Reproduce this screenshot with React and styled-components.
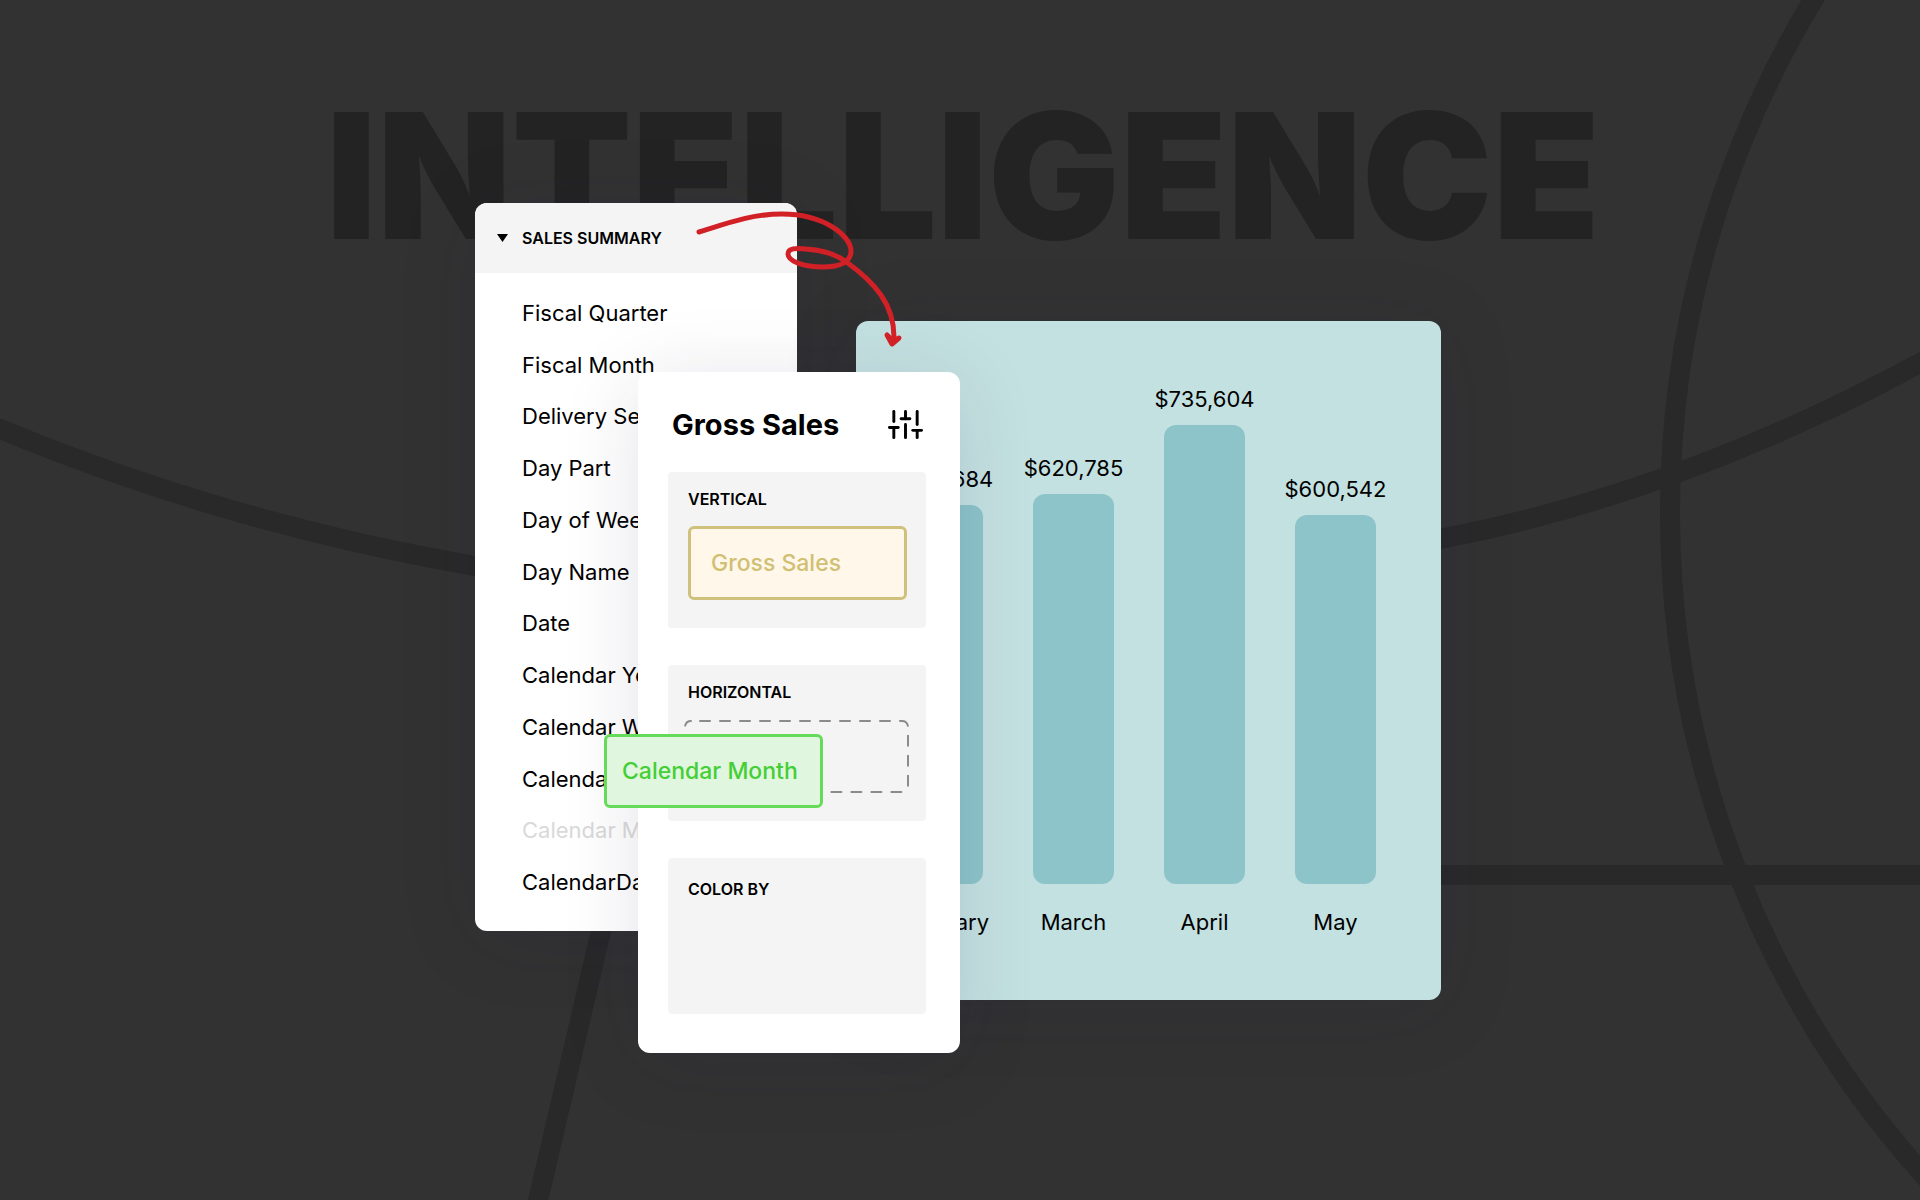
import React, { useState } from 'react';
import styled, { createGlobalStyle } from 'styled-components';
import { FiSliders } from 'react-icons/fi';

const fields = [
  { name: 'Fiscal Quarter' },
  { name: 'Fiscal Month' },
  { name: 'Delivery Service' },
  { name: 'Day Part' },
  { name: 'Day of Week' },
  { name: 'Day Name' },
  { name: 'Date' },
  { name: 'Calendar Year' },
  { name: 'Calendar Week' },
  { name: 'Calendar Quarter' },
  { name: 'Calendar Month', dragging: true },
  { name: 'CalendarDate' },
];

const sales = [
  { month: 'February', value: '$605,684', height: 379 },
  { month: 'March', value: '$620,785', height: 390 },
  { month: 'April', value: '$735,604', height: 459 },
  { month: 'May', value: '$600,542', height: 369 },
];

const App = () => {
  const [open, setOpen] = useState(true);

  return (
    <Page>
      <GlobalStyle />
      <Backdrop viewBox="0 0 1920 1200" preserveAspectRatio="xMidYMid slice" aria-hidden="true">
        <circle cx="2660" cy="513" r="990" />
        <path d="M-40 412 L0 429 Q230 524 475 566 C795 623 1120 610 1440 539 Q1680 493 1920 363 L1960 343" />
        <path d="M1300 875 H1960" />
        <path d="M615 871 L529 1239" />
      </Backdrop>

      <Title>INTELLIGENCE</Title>

      <Stage>
        <FieldsCard>
          <FieldsHeader type="button" aria-expanded={open} onClick={() => setOpen(!open)}>
            <Caret viewBox="0 0 11 8" aria-hidden="true">
              <path d="M0 0 H11 L5.5 8 Z" />
            </Caret>
            SALES SUMMARY
          </FieldsHeader>
          {open && (
            <FieldList>
              {fields.map(field => (
                <Field key={field.name} $dragging={field.dragging}>{field.name}</Field>
              ))}
            </FieldList>
          )}
        </FieldsCard>

        <ConfigCard>
          <ConfigHeader>
            <ConfigTitle>Gross Sales</ConfigTitle>
            <IconButton type="button" aria-label="Settings">
              <FiSliders size={35} />
            </IconButton>
          </ConfigHeader>
          <Slots>
            <Slot>
              <SlotLabel>VERTICAL</SlotLabel>
              <Chip>Gross Sales</Chip>
            </Slot>
            <Slot>
              <SlotLabel>HORIZONTAL</SlotLabel>
              <DropZone>
                <DropOutline aria-hidden="true">
                  <rect x="1" y="2" width="223" height="71" rx="6" />
                </DropOutline>
                <DraggedChip>Calendar Month</DraggedChip>
              </DropZone>
            </Slot>
            <Slot $empty>
              <SlotLabel>COLOR BY</SlotLabel>
            </Slot>
          </Slots>
        </ConfigCard>

        <ChartCard>
          {sales.map(item => (
            <Column key={item.month}>
              <Value>{item.value}</Value>
              <Bar style={{ height: item.height }} />
              <Month>{item.month}</Month>
            </Column>
          ))}
        </ChartCard>

        <Arrow viewBox="695 208 210 140" aria-hidden="true">
          <path d="M699 232 C728 223 752 214 782 214 C824 214 851 236 851 251 C851 262 840 267 823 267 C803 267 788 261 788 254 C788 248 796 248 806 249 C824 250 838 256 845 261 C876 283 894 305 894 337" />
          <path className="head" d="M887 335 L892 344 L899 338 L893 341 Z" />
        </Arrow>
      </Stage>
    </Page>
  );
};

// Styled Components
const GlobalStyle = createGlobalStyle`
  * {
    box-sizing: border-box;
  }

  body {
    margin: 0;
    background: #323232;
    font-family: Inter, 'Open Sans', sans-serif;
    color: #000;
  }
`;

const Page = styled.main`
  position: relative;
  min-height: 100vh;
  padding: 85px 0 120px;
  overflow: hidden;
  background: #323232;
`;

const Backdrop = styled.svg`
  position: absolute;
  inset: 0;
  width: 100%;
  height: 100%;
  fill: none;
  stroke: #292929;
  stroke-width: 20px;
`;

const Title = styled.h1`
  position: relative;
  margin: 0;
  padding-left: 6px;
  font-size: 175px;
  line-height: 180px;
  font-weight: 900;
  text-align: center;
  color: #232323;
`;

const Stage = styled.div`
  position: relative;
  display: flex;
  align-items: flex-start;
  width: fit-content;
  margin: -62px auto 0;
  padding-right: 4px;
`;

const Card = styled.section`
  border-radius: 12px;
  background: #fff;
  box-shadow: 0 8px 80px rgba(31, 31, 71, 0.12);
`;

const FieldsCard = styled(Card)`
  width: 322px;
`;

const FieldsHeader = styled.button`
  display: flex;
  align-items: center;
  gap: 14px;
  width: 100%;
  height: 70px;
  padding: 0 22px;
  border: none;
  border-radius: 12px 12px 0 0;
  background: #f4f4f4;
  font-family: inherit;
  font-size: 16px;
  font-weight: 600;
  color: #000;
  cursor: pointer;
`;

const Caret = styled.svg`
  width: 11px;
  height: 8px;
`;

const FieldList = styled.ul`
  display: flex;
  flex-direction: column;
  height: 658px;
  margin: 0;
  padding: 14px 0 23px 47px;
  list-style: none;
`;

const Field = styled.li`
  display: flex;
  flex: 1;
  align-items: center;
  font-size: 22px;
  white-space: nowrap;
  color: ${({ $dragging }) => ($dragging ? '#d9d9d9' : '#000')};
`;

const ConfigCard = styled(Card)`
  position: relative;
  z-index: 2;
  width: 322px;
  margin: 169px 0 0 -159px;
  padding: 0 34px 39px 30px;
`;

const ConfigHeader = styled.header`
  display: flex;
  align-items: center;
  justify-content: space-between;
  height: 100px;
  padding: 4px 3px 0 4px;
`;

const ConfigTitle = styled.h2`
  margin: 0;
  font-size: 29px;
  font-weight: 700;
`;

const IconButton = styled.button`
  display: flex;
  padding: 0;
  border: none;
  background: none;
  color: #000;
  cursor: pointer;
`;

const Slots = styled.div`
  display: flex;
  flex-direction: column;
  gap: 37px;
`;

const Slot = styled.div`
  height: 156px;
  padding: ${({ $empty }) => ($empty ? '21px' : '17px')} 19px 0 20px;
  border-radius: 4px;
  background: #f4f4f4;
`;

const SlotLabel = styled.h3`
  margin: 0 0 17px;
  font-size: 16px;
  line-height: 20px;
  font-weight: 600;
`;

const Chip = styled.div`
  display: flex;
  align-items: center;
  width: 219px;
  height: 74px;
  padding: 0 20px;
  border: 3px solid #cfc17c;
  border-radius: 6px;
  background: #fef7ea;
  font-size: 23px;
  font-weight: 500;
  white-space: nowrap;
  color: #d1bf72;
  cursor: grab;
`;

const DropZone = styled.div`
  position: relative;
  height: 74px;
  margin: 0 -4px;
`;

const DropOutline = styled.svg`
  display: block;
  width: 227px;
  height: 74px;
  fill: none;
  stroke: #8b8b8b;
  stroke-width: 2px;
  stroke-linecap: round;
  stroke-dasharray: 10 10;
  stroke-dashoffset: -9px;
`;

const DraggedChip = styled(Chip)`
  position: absolute;
  top: 15px;
  left: -80px;
  padding: 0 15px;
  border-color: #66db5a;
  background: #e1f6df;
  color: #43cf35;
`;

const ChartCard = styled(Card)`
  display: flex;
  align-items: flex-end;
  justify-content: flex-end;
  gap: 50px;
  width: 585px;
  min-height: 679px;
  margin: 118px 0 0 -104px;
  padding: 0 65px 62px 0;
  background: #c4e1e1;
`;

const Column = styled.div`
  display: flex;
  flex-direction: column;
  align-items: center;
  width: 81px;
`;

const Value = styled.span`
  margin-bottom: 12px;
  font-size: 22px;
  line-height: 28px;
`;

const Bar = styled.div`
  width: 100%;
  border-radius: 12px;
  background: #8dc4ca;
`;

const Month = styled.span`
  margin-top: 22px;
  font-size: 22px;
  line-height: 32px;
`;

const Arrow = styled.svg`
  position: absolute;
  top: 5px;
  left: 220px;
  z-index: 3;
  width: 210px;
  height: 140px;
  fill: none;
  stroke: #d22027;
  stroke-width: 5px;
  stroke-linecap: round;
  stroke-linejoin: round;
  pointer-events: none;

  .head {
    fill: #d22027;
  }
`;

export default App;
